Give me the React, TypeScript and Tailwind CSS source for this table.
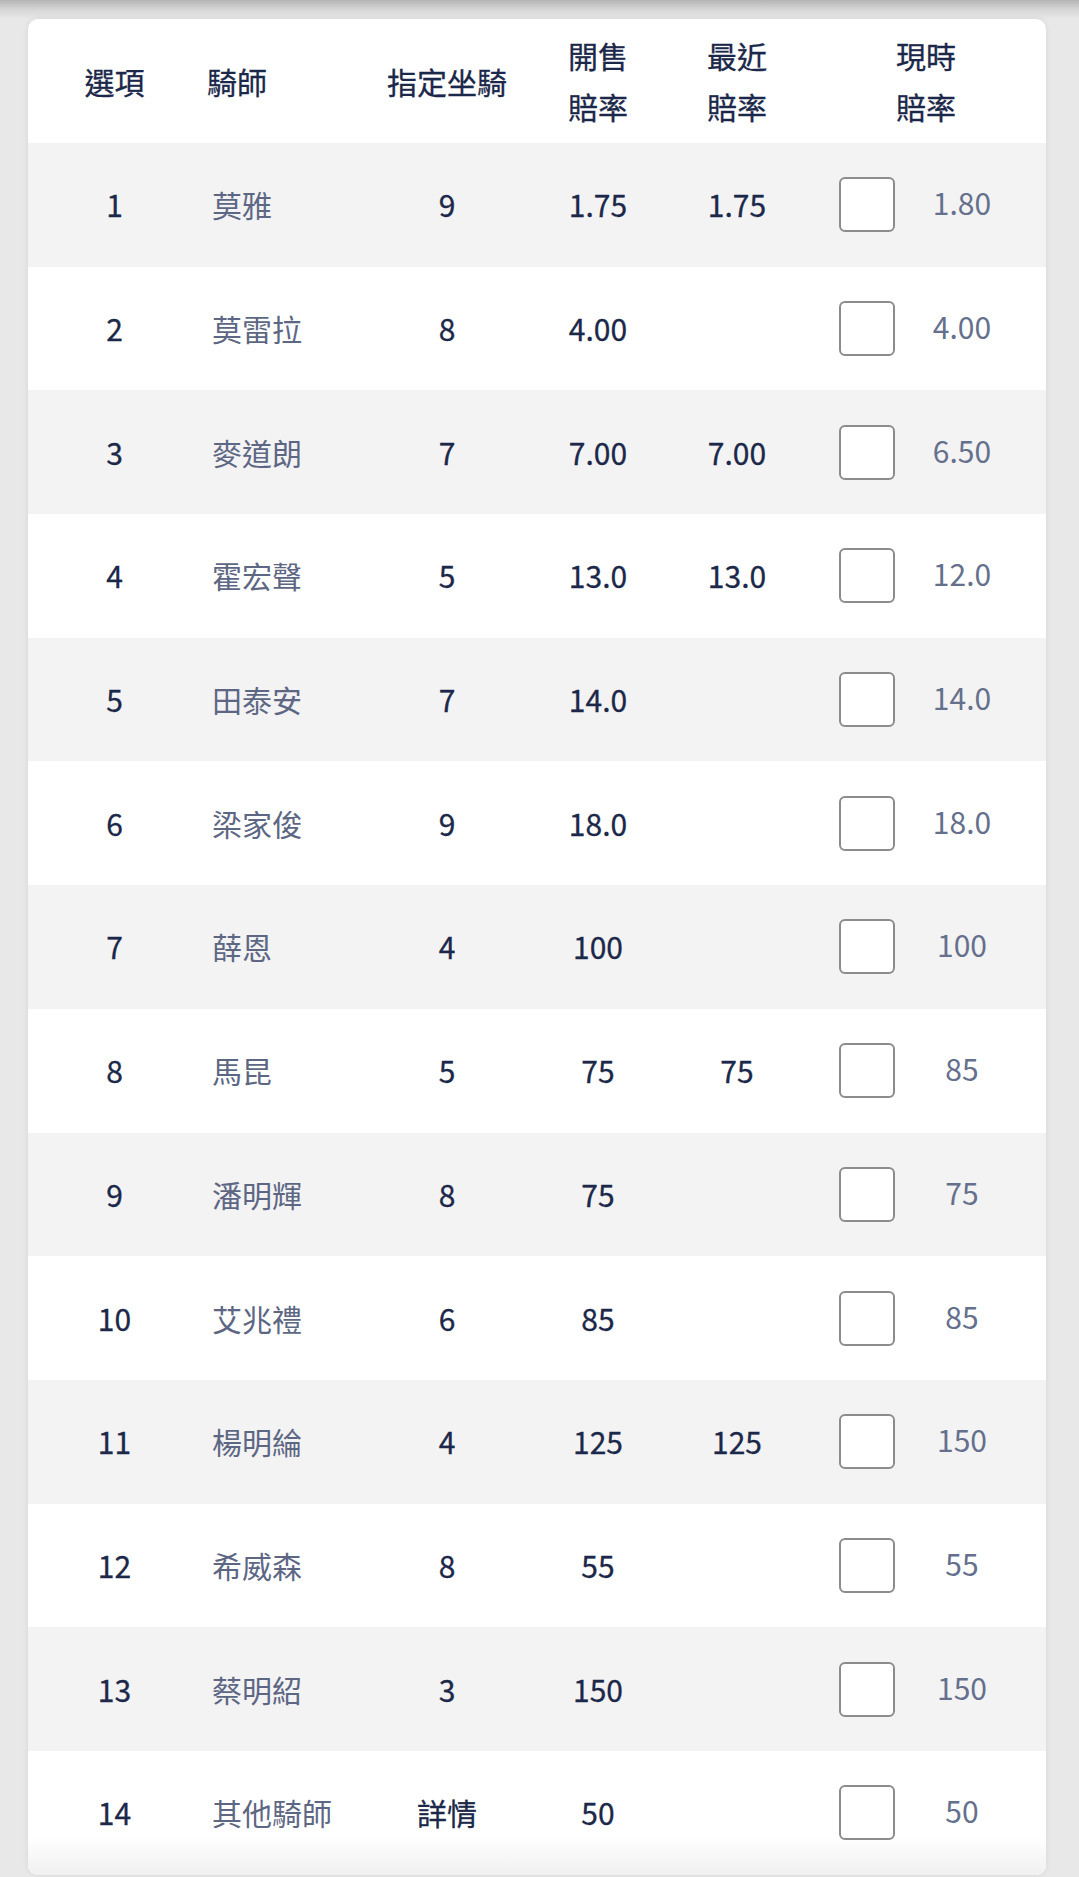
const rows = [
  { no: '1', name: '莫雅', mount: '9', open: '1.75', last: '1.75', now: '1.80' },
  { no: '2', name: '莫雷拉', mount: '8', open: '4.00', last: '', now: '4.00' },
  { no: '3', name: '麥道朗', mount: '7', open: '7.00', last: '7.00', now: '6.50' },
  { no: '4', name: '霍宏聲', mount: '5', open: '13.0', last: '13.0', now: '12.0' },
  { no: '5', name: '田泰安', mount: '7', open: '14.0', last: '', now: '14.0' },
  { no: '6', name: '梁家俊', mount: '9', open: '18.0', last: '', now: '18.0' },
  { no: '7', name: '薛恩', mount: '4', open: '100', last: '', now: '100' },
  { no: '8', name: '馬昆', mount: '5', open: '75', last: '75', now: '85' },
  { no: '9', name: '潘明輝', mount: '8', open: '75', last: '', now: '75' },
  { no: '10', name: '艾兆禮', mount: '6', open: '85', last: '', now: '85' },
  { no: '11', name: '楊明綸', mount: '4', open: '125', last: '125', now: '150' },
  { no: '12', name: '希威森', mount: '8', open: '55', last: '', now: '55' },
  { no: '13', name: '蔡明紹', mount: '3', open: '150', last: '', now: '150' },
  { no: '14', name: '其他騎師', mount: '詳情', open: '50', last: '', now: '50' },
]

const grid = 'grid grid-cols-[173px_171px_150px_152px_126px_1fr] items-center'
// medium weight isn't installed, so thicken regular a little
const dark = 'text-[#1b2849] [-webkit-text-stroke:0.3px_#1b2849]'

export default function App() {
  return (
    <div
      className="w-[1079px] h-[1877px] overflow-hidden bg-[#e8e8e8]"
      style={{ fontFamily: '"Noto Sans CJK TC", "Noto Sans", sans-serif' }}
    >
      {/* shadow from the bar above */}
      <div className="h-[19px] bg-gradient-to-b from-[#b4b4b4] via-[#d6d6d6] to-[#e8e8e8]" />

      <div className="ml-[28px] w-[1018px] overflow-hidden rounded-[10px] bg-white shadow-[0_0_6px_rgba(0,0,0,0.08)]">
        {/* header */}
        <div className={`${grid} h-[124px] text-[30px] ${dark}`}>
          <div className="text-center">選項</div>
          <div className="pl-[6px]">騎師</div>
          <div className="text-center">指定坐騎</div>
          <div className="text-center leading-[51px]">
            開售
            <br />
            賠率
          </div>
          <div className="text-center leading-[51px]">
            最近
            <br />
            賠率
          </div>
          <div className="pl-[96px] leading-[51px]">
            現時
            <br />
            賠率
          </div>
        </div>

        {rows.map((r, i) => (
          <div
            key={r.no}
            className={`${grid} h-[123.7px] text-[30px] ${i % 2 === 0 ? 'bg-[#f3f3f3]' : 'bg-white'} ${i === rows.length - 1 ? 'bg-gradient-to-b from-white from-70% to-[#f0f0f0]' : ''}`}
          >
            <div className={`text-center ${dark}`}>{r.no}</div>
            <div className="pl-[11px] text-[#5d6784]">{r.name}</div>
            <div className={`text-center ${dark}`}>{r.mount}</div>
            <div className={`text-center ${dark}`}>{r.open}</div>
            <div className={`text-center ${dark}`}>{r.last}</div>
            <div className="flex items-center pl-[39px]">
              <div className="h-[55px] w-[56px] rounded-[6px] border-2 border-[#8c8c8c] bg-white" />
              <div className="mb-[4px] ml-[17px] w-[100px] text-center text-[#65708d]">{r.now}</div>
            </div>
          </div>
        ))}
      </div>
    </div>
  )
}
